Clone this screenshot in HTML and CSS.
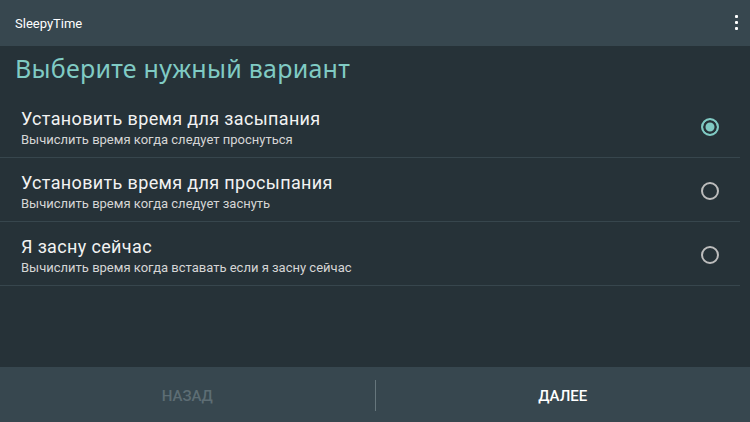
FILE: index.html
```html
<!DOCTYPE html>
<html lang="ru">
<head>
    <meta charset="UTF-8" />
    <meta name="viewport" content="width=device-width, initial-scale=1.0" />
    <title>SleepyTime</title>
    <link rel="stylesheet" href="styles.css">
</head>
<body>
    <div class="actionbar">
        <span class="app-title">SleepyTime</span>
        <button class="overflow" aria-label="menu">
            <span></span><span></span><span></span>
        </button>
    </div>
    <div class="content">
        <h1 class="heading">Выберите нужный вариант</h1>
        <ul class="options">
            <li class="option checked">
                <div class="option-text">
                    <span class="option-title">Установить время для засыпания</span>
                    <span class="option-sub">Вычислить время когда следует проснуться</span>
                </div>
                <span class="radio"></span>
            </li>
            <li class="option">
                <div class="option-text">
                    <span class="option-title">Установить время для просыпания</span>
                    <span class="option-sub">Вычислить время когда следует заснуть</span>
                </div>
                <span class="radio"></span>
            </li>
            <li class="option">
                <div class="option-text">
                    <span class="option-title">Я засну сейчас</span>
                    <span class="option-sub">Вычислить время когда вставать если я засну сейчас</span>
                </div>
                <span class="radio"></span>
            </li>
        </ul>
    </div>
    <div class="buttons">
        <button class="btn disabled">НАЗАД</button>
        <span class="sep"></span>
        <button class="btn">ДАЛЕЕ</button>
    </div>
</body>
</html>
```

FILE: styles.css
```css
html, body {
    margin: 0;
    padding: 0;
}
body {
    width: 750px;
    height: 422px;
    display: flex;
    flex-direction: column;
    background: #263238;
    font-family: Roboto, "Noto Sans", sans-serif;
    color: #f2f2f2;
    overflow: hidden;
}
.actionbar {
    height: 46px;
    flex-shrink: 0;
    display: flex;
    align-items: center;
    justify-content: space-between;
    padding: 0 12px 0 15px;
    background: #37474f;
}
.app-title {
    font-size: 13px;
    color: #ffffff;
    padding-top: 1px;
}
.overflow {
    display: flex;
    flex-direction: column;
    gap: 3px;
    padding: 0;
    margin-top: -1px;
    background: none;
    border: none;
}
.overflow span {
    width: 3px;
    height: 3px;
    background: #ffffff;
    border-radius: 1px;
}
.content {
    flex: 1;
}
.heading {
    margin: 8px 0 12px 15px;
    font-family: "Noto Sans", Roboto, sans-serif;
    font-size: 25px;
    line-height: 28px;
    letter-spacing: 0.25px;
    font-weight: 400;
    color: #80cbc4;
}
.options {
    list-style: none;
    margin: 0 10px 0 0;
    padding: 0;
}
.option {
    height: 63px;
    display: flex;
    align-items: flex-start;
    justify-content: space-between;
    padding-left: 21px;
    border-bottom: 1px solid #37464d;
}
.option-text {
    display: flex;
    flex-direction: column;
    padding-top: 14px;
}
.option-title {
    font-size: 18px;
    line-height: 22px;
    letter-spacing: 0.35px;
    color: #f2f2f2;
}
.option-sub {
    font-size: 13px;
    line-height: 16px;
    margin-top: 2px;
    color: #d6d6d6;
}
.radio {
    width: 14px;
    height: 14px;
    margin: 24px 21px 0 0;
    border: 2px solid #bdbdbd;
    border-radius: 50%;
    box-sizing: content-box;
}
.option.checked .radio {
    border-color: #80cbc4;
    background: #80cbc4;
    box-shadow: inset 0 0 0 2.5px #263238;
}
.buttons {
    height: 55px;
    flex-shrink: 0;
    display: flex;
    align-items: center;
    background: #37474f;
}
.btn {
    flex: 1;
    height: 100%;
    background: none;
    border: none;
    font-family: Roboto, "Noto Sans", sans-serif;
    font-size: 15px;
    font-weight: 500;
    color: #ffffff;
    padding: 2px 0 0;
}
.btn.disabled {
    color: #5d6d74;
}
.sep {
    width: 1px;
    height: 31px;
    margin-top: 1px;
    background: #66767c;
}
```
